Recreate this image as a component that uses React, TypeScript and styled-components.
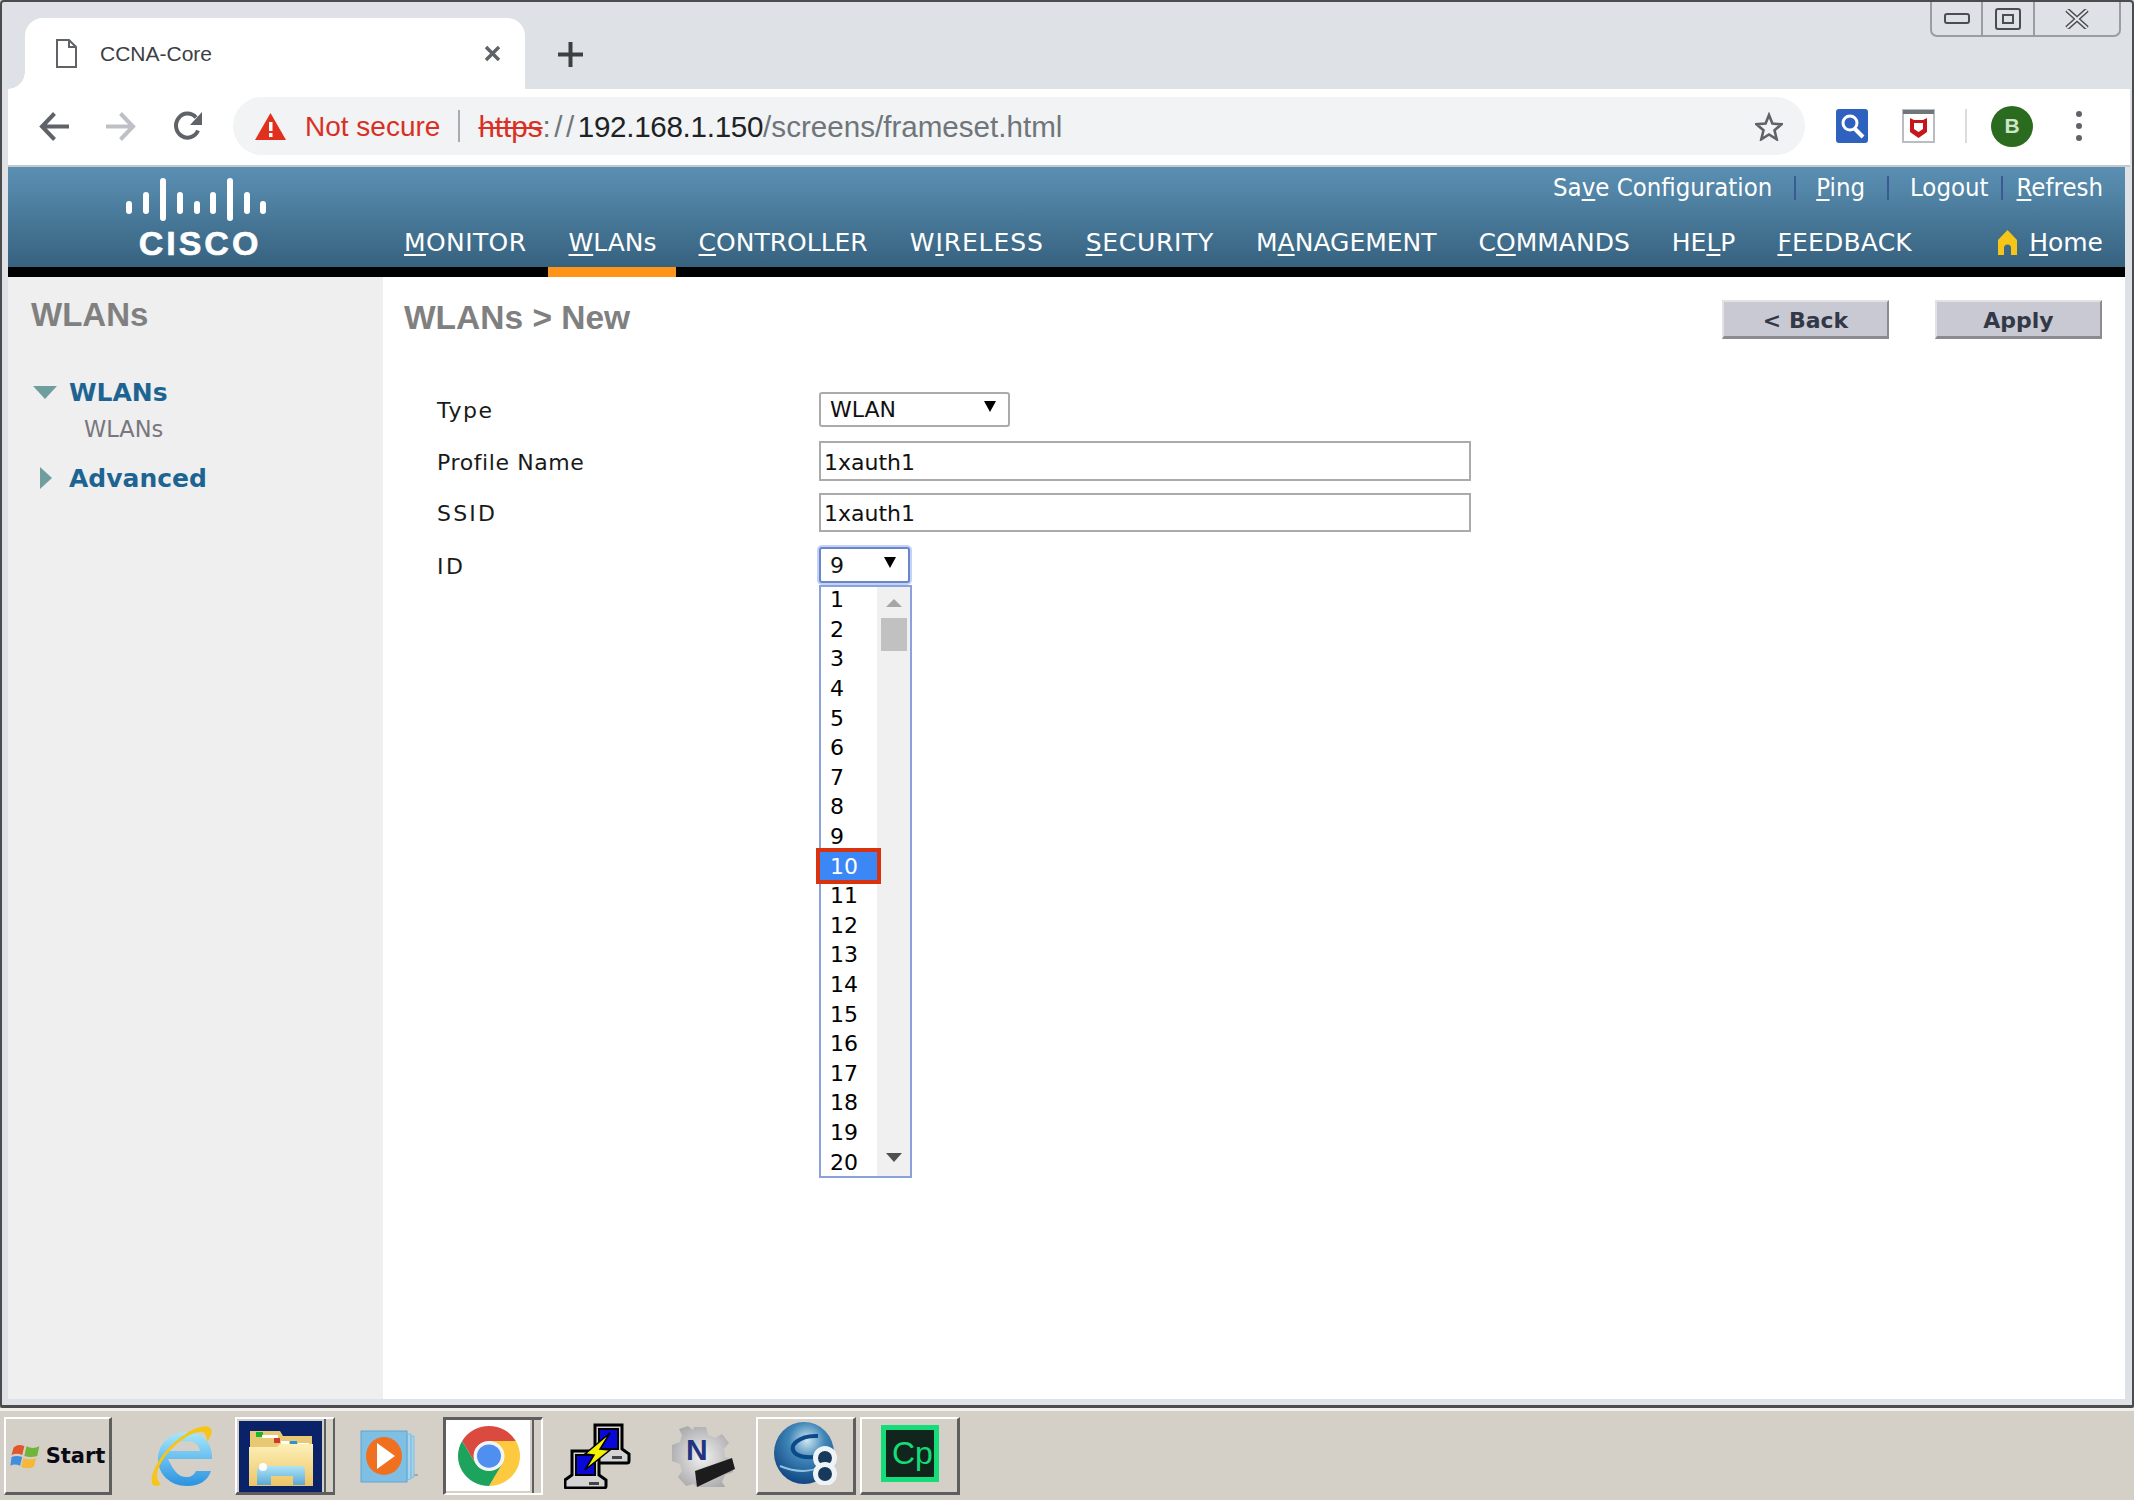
import styled, { createGlobalStyle } from 'styled-components';

const GlobalStyle = createGlobalStyle`
    html, body {
        margin: 0;
        padding: 0;
        background: #d4d0c8;
    }
    * {
        box-sizing: border-box;
    }
`;

const Page = styled.div`
    width: 2134px;
    height: 1500px;
    overflow: hidden;
    display: flex;
    flex-direction: column;
    background: #d4d0c8;
`;

const Window = styled.div`
    height: 1408px;
    display: flex;
    flex-direction: column;
    background: #dee1e6;
    border: 2px solid #4c4c4c;
    border-bottom-width: 3px;
    border-radius: 4px 4px 2px 2px;
`;

/* browser chrome */
const TabStrip = styled.div`
    height: 87px;
    display: flex;
    align-items: flex-start;
    padding: 0 11px 0 23px;
`;

const Tab = styled.div`
    position: relative;
    width: 500px;
    height: 71px;
    margin-top: 16px;
    padding: 0 24px 0 31px;
    display: flex;
    align-items: center;
    background: #fff;
    border-radius: 18px 18px 0 0;
    font: 21px "Liberation Sans", Arial, sans-serif;
    color: #3c4043;

    &::before {
        content: '';
        position: absolute;
        left: -17px;
        bottom: 0;
        width: 17px;
        height: 17px;
        background: radial-gradient(circle at 0 0, transparent 16.5px, #fff 17px);
    }
`;

const TabTitle = styled.span`
    margin-left: 23px;
    flex: 1;
`;

const NewTab = styled.div`
    margin: 40px 0 0 33px;
    display: flex;
`;

const WindowControls = styled.div`
    margin-left: auto;
    width: 191px;
    height: 35px;
    display: flex;
    border: 2px solid #9a9da3;
    border-top: 0;
    border-radius: 0 0 7px 7px;
`;

const ControlCell = styled.div<{ $w: number; $last?: boolean }>`
    width: ${({ $w }) => $w}px;
    display: flex;
    align-items: center;
    justify-content: center;
    border-right: ${({ $last }) => ($last ? '0' : '2px solid #9a9da3')};
`;

const Frame = styled.div`
    flex: 1;
    display: flex;
    flex-direction: column;
    padding: 0 7px 6px 6px;
    min-height: 0;
`;

const Toolbar = styled.div`
    height: 78px;
    margin-right: -5px;
    padding: 0 0 2px 12px;
    display: flex;
    align-items: center;
    background: #fff;
    border-bottom: 2px solid #c6c8cb;
`;

const ToolButton = styled.div`
    width: 67px;
    display: flex;
    justify-content: center;
`;

const Omnibox = styled.div`
    width: 1572px;
    height: 58px;
    margin-left: 12px;
    padding: 0 22px;
    display: flex;
    align-items: center;
    background: #f1f3f4;
    border-radius: 29px;
    font: 28px "Liberation Sans", Arial, sans-serif;
    white-space: nowrap;
`;

const NotSecure = styled.span`
    margin: 2px 0 0 19px;
    color: #d93025;
`;

const OmniDivider = styled.span`
    width: 2px;
    height: 32px;
    margin: 0 18px 0 18px;
    background: #a9abae;
`;

const Url = styled.span`
    margin-top: 2px;
    font-size: 29.6px;
`;

const Scheme = styled.span`
    color: #d93025;
    text-decoration: line-through;
`;

const UrlDim = styled.span<{ $spaced?: boolean }>`
    color: #70757a;
    letter-spacing: ${({ $spaced }) => ($spaced ? '3.5px' : '0')};
`;

const UrlHost = styled.span`
    color: #202124;
    letter-spacing: -0.3px;
`;

const Star = styled.div`
    margin-left: auto;
    display: flex;
`;

const Extensions = styled.div`
    margin-left: 31px;
    display: flex;
    align-items: center;
`;

const ExtSlot = styled.div<{ $ml?: number }>`
    margin-left: ${({ $ml }) => $ml ?? 0}px;
    display: flex;
`;

const ToolDivider = styled.span`
    width: 2px;
    height: 34px;
    margin: 0 24px 0 30px;
    background: #dadce0;
`;

const Avatar = styled.div`
    width: 42px;
    height: 41px;
    display: flex;
    align-items: center;
    justify-content: center;
    border-radius: 50%;
    background: #2b6b20;
    color: #cfe3c8;
    font: bold 21px "Liberation Sans", Arial, sans-serif;
`;

const MoreDots = styled.div`
    margin-left: 43px;
    display: flex;
    flex-direction: column;
    gap: 6px;

    span {
        width: 6px;
        height: 6px;
        border-radius: 50%;
        background: #5f6368;
    }
`;

/* controller page */
const Header = styled.div`
    height: 100px;
    display: flex;
    background: linear-gradient(#5b90b3, #36627f);
`;

const LogoBox = styled.div`
    width: 396px;
    padding: 11px 0 0 118px;
    display: flex;
    flex-direction: column;
    color: #fff;
`;

const CiscoWord = styled.div`
    width: 142px;
    margin: 6px 0 0 3px;
    text-align: center;
    font: bold 34px/30px "Liberation Sans", Arial, sans-serif;
    letter-spacing: 3px;
    -webkit-text-stroke: 0.6px #fff;
`;

const HeaderRight = styled.div`
    flex: 1;
    display: flex;
    flex-direction: column;
    padding-right: 22px;
    color: #fff;
`;

const TopLinks = styled.div`
    height: 37px;
    display: flex;
    justify-content: flex-end;
    align-items: flex-end;
    font: 25.5px/33px "DejaVu Sans Condensed", "DejaVu Sans", sans-serif;
    font-stretch: condensed;
`;

const LinkSep = styled.span<{ $l: number; $r: number }>`
    width: 2px;
    height: 24px;
    margin: 0 ${({ $r }) => $r}px 4px ${({ $l }) => $l}px;
    background: #3c5a92;
`;

const Key = styled.span`
    text-decoration: underline;
    text-decoration-thickness: 2px;
    text-underline-offset: 3px;
`;

const Nav = styled.nav`
    flex: 1;
    display: flex;
    align-items: center;
    gap: 42px;
    padding-top: 13px;
    font: 25px "DejaVu Sans", sans-serif;
    white-space: nowrap;
`;

const NavItem = styled.span<{ $spacing?: number }>`
    letter-spacing: ${({ $spacing }) => $spacing ?? 0}px;
`;

const HomeLink = styled.span`
    margin-left: auto;
    display: flex;
    align-items: center;
    gap: 11px;
`;

const BlackBar = styled.div`
    height: 10px;
    padding-left: 540px;
    background: #000;
`;

const ActiveMark = styled.div`
    width: 128px;
    height: 100%;
    background: #ff9419;
`;

const Main = styled.div`
    flex: 1;
    display: flex;
    min-height: 0;
    background: #fff;
`;

const Sidebar = styled.aside`
    width: 375px;
    padding: 18px 0 0 23px;
    background: #efefef;
`;

const SideHeading = styled.h2`
    margin: 0 0 37px;
    font: bold 33px/40px "Liberation Sans", Arial, sans-serif;
    color: #808080;
`;

const TreeRow = styled.div<{ $mt?: number }>`
    height: 40px;
    margin-top: ${({ $mt }) => $mt ?? 0}px;
    display: flex;
    align-items: center;
    font: bold 25px "DejaVu Sans", sans-serif;
    color: #1e6492;
`;

const Caret = styled.span`
    width: 38px;
    display: flex;
`;

const CaretDown = styled.span`
    margin-left: 2px;
    border-style: solid;
    border-width: 13px 12px 0;
    border-color: #6f9e9e transparent transparent;
`;

const CaretRight = styled.span`
    margin-left: 9px;
    border-style: solid;
    border-width: 11px 0 11px 12px;
    border-color: transparent transparent transparent #6f9e9e;
`;

const TreeChild = styled.div`
    margin-left: 53px;
    font: 22.5px/34px "DejaVu Sans", sans-serif;
    color: #77777e;
`;

const Content = styled.main`
    flex: 1;
    padding: 23px 23px 0 21px;
`;

const TitleRow = styled.div`
    height: 39px;
    display: flex;
    align-items: center;
`;

const PageTitle = styled.h1`
    margin: -4px auto 0 0;
    font: bold 33.5px "Liberation Sans", Arial, sans-serif;
    color: #808080;
`;

const ActionButton = styled.button<{ $ml?: number }>`
    width: 167px;
    height: 39px;
    margin-left: ${({ $ml }) => $ml ?? 0}px;
    padding: 2px 0 0;
    background: #c9c9d4;
    border: 2px solid;
    border-color: #e2e2e6 #8b8b90 #8b8b90 #e2e2e6;
    border-width: 2px 2px 3px 2px;
    font: bold 22px "DejaVu Sans", sans-serif;
    color: #333847;
`;

const Form = styled.div`
    margin: 53px 0 0 33px;
`;

const FormRow = styled.div<{ $h: number; $mb: number }>`
    height: ${({ $h }) => $h}px;
    margin-bottom: ${({ $mb }) => $mb}px;
    display: grid;
    grid-template-columns: 382px 1fr;
    align-items: center;
    font: 22px "DejaVu Sans", sans-serif;
    color: #1a1a1a;
`;

const FieldLabel = styled.label<{ $spacing: number }>`
    display: block;
    padding-top: 2px;
    letter-spacing: ${({ $spacing }) => $spacing}px;
`;

const TextField = styled.div`
    width: 652px;
    height: 100%;
    padding: 2px 0 0 3px;
    display: flex;
    align-items: center;
    background: #fff;
    border: 2px solid #ababab;
    color: #111;
`;

const SelectField = styled.div<{ $w: number; $focus?: boolean }>`
    position: relative;
    width: ${({ $w }) => $w}px;
    height: 100%;
    padding: 0 12px 0 9px;
    display: flex;
    align-items: center;
    justify-content: space-between;
    background: #fff;
    border: 2px solid ${({ $focus }) => ($focus ? '#6a85c8' : '#ababab')};
    border-radius: 3px;
    box-shadow: ${({ $focus }) => ($focus ? '0 0 0 2px #c3d2f6' : 'none')};
    color: #111;
`;

const SelectArrow = styled.span`
    margin-top: -6px;
    border-style: solid;
    border-width: 11px 6.5px 0;
    border-color: #000 transparent transparent;
`;

const ListBox = styled.div`
    position: absolute;
    top: 36px;
    left: -2px;
    width: 93px;
    height: 593px;
    display: flex;
    background: #fff;
    border: 2px solid #8ba1dc;
    font: 22px "DejaVu Sans", sans-serif;
    color: #000;
`;

const ListItems = styled.div`
    width: 56px;
    margin-top: -2px;
`;

const ListItem = styled.div<{ $active?: boolean }>`
    position: relative;
    height: ${({ $active }) => ($active ? 36 : 29.6)}px;
    margin: ${({ $active }) => ($active ? '-3.2px -4px -3.2px -5px' : '0')};
    padding-left: ${({ $active }) => ($active ? 10 : 9)}px;
    display: flex;
    align-items: center;
    background: ${({ $active }) => ($active ? '#3b87f5' : 'transparent')};
    border: ${({ $active }) => ($active ? '4px solid #d9320e' : '0')};
    color: ${({ $active }) => ($active ? '#fff' : '#000')};
`;

const ScrollBar = styled.div`
    flex: 1;
    padding: 12px 3px 14px 4px;
    display: flex;
    flex-direction: column;
    align-items: center;
    background: #f0f0f0;
`;

const ScrollUp = styled.span`
    border-style: solid;
    border-width: 0 8px 8px;
    border-color: transparent transparent #a6a6a6;
`;

const ScrollThumb = styled.span`
    width: 100%;
    height: 33px;
    margin-top: 11px;
    background: #c1c1c1;
`;

const ScrollDown = styled.span`
    margin-top: auto;
    border-style: solid;
    border-width: 9px 8px 0;
    border-color: #505050 transparent transparent;
`;

/* windows taskbar */
const Taskbar = styled.div`
    flex: 1;
    padding: 6px 0 5px 4px;
    display: flex;
    align-items: stretch;
    background: #d4d0c8;
    border-top: 3px solid #f1f0ec;
`;

const RaisedButton = styled.div<{ $w: number; $ml?: number; $pb?: number }>`
    width: ${({ $w }) => $w}px;
    margin-left: ${({ $ml }) => $ml ?? 0}px;
    padding-bottom: ${({ $pb }) => $pb ?? 0}px;
    display: flex;
    align-items: center;
    justify-content: center;
    border: 2px solid;
    border-color: #fff #5e5e5e #5e5e5e #fff;
    border-width: 2px 3px 3px 2px;
`;

const StartLabel = styled.span`
    margin-left: 3px;
    font: bold 21px "DejaVu Sans", sans-serif;
    color: #0a0a14;
`;

const IconSlot = styled.div<{ $w: number; $pl?: number }>`
    width: ${({ $w }) => $w}px;
    padding-left: ${({ $pl }) => $pl ?? 0}px;
    display: flex;
    align-items: center;
    justify-content: center;
`;

const ExplorerButton = styled.div`
    width: 100px;
    display: flex;
    border: 2px solid;
    border-color: #fff #5e5e5e #5e5e5e #fff;
    border-width: 2px 2px 3px 2px;
`;

const ExplorerFace = styled.div`
    flex: 1;
    margin: 2px 0 0 2px;
    display: flex;
    align-items: center;
    justify-content: center;
    background: #0a2368;
`;

const ButtonSliver = styled.div`
    width: 9px;
    margin-left: 2px;
    background: #d4d0c8;
    border-left: 2px solid #5e5e5e;
`;

const ChromeButton = styled.div`
    width: 100px;
    display: flex;
    border: 2px solid;
    border-color: #5e5e5e #fff #fff #5e5e5e;
    border-width: 3px 2px 2px 3px;
`;

const ChromeFace = styled.div`
    flex: 1;
    padding-left: 2px;
    display: flex;
    align-items: center;
    justify-content: center;
    background: #fff;
    border-bottom: 2px solid #d4d0c8;
`;

const FileIcon = () => (
    <svg width="21" height="29" viewBox="0 0 21 29">
        <path d="M1 1h12l7 7v20H1z M13 1v7h7" fill="#fff" stroke="#5f6368" strokeWidth="2" />
    </svg>
);

const CloseIcon = () => (
    <svg width="17" height="17" viewBox="0 0 17 17">
        <path d="M2 2l13 13M15 2L2 15" stroke="#5f6368" strokeWidth="3.4" />
    </svg>
);

const PlusIcon = () => (
    <svg width="25" height="25" viewBox="0 0 25 25">
        <path d="M12.5 0v25M0 12.5h25" stroke="#3c4043" strokeWidth="4" />
    </svg>
);

const ArrowIcon = ({ color, flip }: { color: string; flip?: boolean }) => (
    <svg width="30" height="29" viewBox="0 0 30 29" style={flip ? { transform: 'scaleX(-1)' } : undefined}>
        <path d="M30 14.5H5M15.5 1.5L3 14.5l12.5 13" fill="none" stroke={color} strokeWidth="4" />
    </svg>
);

const ReloadIcon = () => (
    <svg width="30" height="30" viewBox="0 0 30 30">
        <path d="M25 19.5A11.5 12 0 1 1 23 6.500" fill="none" stroke="#5f6368" strokeWidth="4" />
        <path d="M29 1v13H17z" fill="#5f6368" />
    </svg>
);

const WarningIcon = () => (
    <svg width="31" height="27" viewBox="0 0 31 27">
        <path d="M15.500 0L31 27H0z" fill="#e0301e" />
        <path d="M14 9h3.500v9H14zM14 20h3.500v4H14z" fill="#fff" />
    </svg>
);

const StarIcon = () => (
    <svg width="28" height="29" viewBox="0 0 28 29">
        <path
            d="M14 3l3.400 8.600 9.100.7-7 6 2.200 9L14 22.500 6.300 27.300l2.200-9-7-6 9.100-.7z"
            fill="none"
            stroke="#5f6368"
            strokeWidth="2.600"
        />
    </svg>
);

const SearchExtIcon = () => (
    <svg width="32" height="34" viewBox="0 0 32 34">
        <rect width="32" height="34" rx="3" fill="#2f62bf" />
        <circle cx="14" cy="14" r="7" fill="#2f62bf" stroke="#fff" strokeWidth="3" />
        <path d="M19 20l8 8" stroke="#fff" strokeWidth="4" />
    </svg>
);

const ShieldExtIcon = () => (
    <svg width="33" height="34" viewBox="0 0 33 34">
        <rect x="1" y="1" width="31" height="32" fill="#fff" stroke="#b9bcc0" strokeWidth="2" />
        <rect x="1" y="1" width="31" height="4" fill="#70757a" />
        <path d="M8 9l4 2h9l4-2v14l-8.500 6L8 23z" fill="#c5161d" />
        <path d="M12 14h9v6l-4.500 3-4.500-3z" fill="#fff" />
    </svg>
);

const CiscoBars = () => (
    <svg width="142" height="44" viewBox="0 0 142 44">
        {[
            [0, 23, 13],
            [17, 14, 22],
            [34, 0, 43],
            [51, 14, 22],
            [68, 23, 13],
            [84, 14, 22],
            [101, 0, 43],
            [118, 14, 22],
            [134, 23, 13],
        ].map(([x, y, h]) => (
            <rect key={x} x={x} y={y} width="6" height={h} rx="3" fill="#fff" />
        ))}
    </svg>
);

const HomeIcon = () => (
    <svg width="21" height="25" viewBox="0 0 21 25">
        <path d="M10.500 0L20 10v15h-6v-7a3.500 3.500 0 0 0-7 0v7H1V10z" fill="#f5c518" />
    </svg>
);

const WinMin = () => (
    <svg width="26" height="11" viewBox="0 0 26 11">
        <rect x="1" y="1" width="24" height="9" rx="2" fill="none" stroke="#4a4d52" strokeWidth="2" />
    </svg>
);

const WinMax = () => (
    <svg width="26" height="22" viewBox="0 0 26 22">
        <rect x="1" y="1" width="24" height="20" rx="2" fill="none" stroke="#4a4d52" strokeWidth="2" />
        <rect x="8" y="7" width="10" height="8" fill="none" stroke="#4a4d52" strokeWidth="2" />
    </svg>
);

const WinClose = () => (
    <svg width="24" height="20" viewBox="0 0 24 20">
        <path d="M2 1l20 18M22 1L2 19" stroke="#4a4d52" strokeWidth="5" />
        <path d="M2 1l20 18M22 1L2 19" stroke="#e6e8ec" strokeWidth="2" />
    </svg>
);

const WinFlag = () => (
    <svg width="33" height="30" viewBox="0 0 30 28">
        <path d="M3 6q5-4 10-1l-2 8q-5-2-10 0z" fill="#e2562a" />
        <path d="M15 5q6 3 12 0l-2 9q-6 2-12 0z" fill="#6fb53a" />
        <path d="M1 15q5-2 10 0l-2 8q-5-2-9 0z" fill="#3f8fdc" />
        <path d="M12 16q6 2 12 0l-2 8q-6 3-12 0z" fill="#f4b93a" />
    </svg>
);

const IeIcon = () => (
    <svg width="64" height="63" viewBox="0 0 64 63">
        <defs>
            <linearGradient id="ie-blue" x1="0" y1="0" x2="0" y2="1">
                <stop offset="0" stopColor="#a6e8fc" />
                <stop offset="1" stopColor="#2a92e0" />
            </linearGradient>
        </defs>
        <path
            d="M18 34h44c1-16-10-27-25-27C20 7 8 19 8 34s12 27 29 27c13 0 21-6 24-15H46c-2 4-5 6-9 6-9 0-13-6-19-18zM20 26c1-7 8-10 17-10 8 0 12 4 13 10z"
            fill="url(#ie-blue)"
            fillRule="evenodd"
        />
        <path
            d="M3 60C-3 52 12 24 34 10 44 3 58-2 61 4c2 3-1 9-4 13 0-5-1-10-6-10C34 7 8 34 7 50c0 4 1 7 4 9-3 2-6 3-8 1z"
            fill="#f5c518"
        />
    </svg>
);

const ExplorerIcon = () => (
    <svg width="66" height="60" viewBox="0 0 66 60">
        <defs>
            <linearGradient id="folder-body" x1="0" y1="0" x2="0" y2="1">
                <stop offset="0" stopColor="#fdf0b8" />
                <stop offset="1" stopColor="#ecc566" />
            </linearGradient>
            <linearGradient id="folder-stand" x1="0" y1="0" x2="0" y2="1">
                <stop offset="0" stopColor="#aee4f5" />
                <stop offset="1" stopColor="#5aa9d6" />
            </linearGradient>
        </defs>
        <path d="M2 4h30l3 5h29v50H2z" fill="#e9c873" />
        <rect x="8" y="5" width="7" height="5" fill="#1cb52e" />
        <rect x="26" y="11" width="6" height="5" fill="#d23a28" />
        <rect x="42" y="14" width="7" height="5" fill="#2a90e0" />
        <path d="M14 8h16v3H14zM33 14h8v3h-8zM50 16h11v3H50z" fill="#fff" />
        <path d="M1 20h28l3-3h33v42H1z" fill="url(#folder-body)" />
        <path d="M9 58V44q0-5 5-5h38q5 0 5 5v14H45V49H23v9z" fill="url(#folder-stand)" />
        <circle cx="15" cy="40" r="4" fill="#fff" />
    </svg>
);

const PlayerIcon = () => (
    <svg width="58" height="53" viewBox="0 0 58 53">
        <path d="M47 4h4v45l-4 1zM51 6h3v41l-3 1z" fill="#a9d3ea" stroke="#7fbfe3" />
        <rect x="1" y="1" width="46" height="51" fill="#7fbfe3" stroke="#5fa6d0" />
        <ellipse cx="24" cy="26" rx="18" ry="19" fill="#f0701f" />
        <path d="M17 13l18 13-18 13z" fill="#fff" />
        <rect x="54" y="44" width="4" height="2" fill="#aaa79f" />
    </svg>
);

const ChromeIcon = () => {
    const sector = 'M5.150 16.500A31 31 0 0 1 58.850 16.500H32A15.500 15.500 0 0 0 18.580 39.750Z';

    return (
        <svg width="64" height="62" viewBox="0 0 64 64" preserveAspectRatio="none">
            <circle cx="32" cy="32" r="31" fill="#fff" />
            <path d={sector} fill="#db4a3f" />
            <path d={sector} fill="#fdc93f" transform="rotate(120 32 32)" />
            <path d={sector} fill="#1da35b" transform="rotate(240 32 32)" />
            <circle cx="32" cy="32" r="15" fill="#f1f3f4" />
            <circle cx="32" cy="32" r="12" fill="#4f8ff0" />
        </svg>
    );
};

const PuttyIcon = () => (
    <svg width="67" height="66" viewBox="0 0 67 66">
        <path d="M31 2h27v24l7 5v7a2 2 0 0 1-2 2H34V26h-3z" fill="#d4d4d4" stroke="#000" strokeWidth="3" />
        <rect x="35" y="6" width="19" height="20" fill="#0808d8" stroke="#000" strokeWidth="2" />
        <rect x="48" y="33" width="10" height="3" fill="#444" />
        <path d="M8 28h27v24l7 5v6a2 2 0 0 1-2 2H3a2 2 0 0 1-2-2v-6l7-5z" fill="#d4d4d4" stroke="#000" strokeWidth="3" />
        <rect x="12" y="32" width="19" height="20" fill="#0808d8" stroke="#000" strokeWidth="2" />
        <rect x="25" y="59" width="10" height="3" fill="#444" />
        <path d="M46 10L36 26l10 1-25 20 9-15-9-1z" fill="#f4f000" stroke="#000" strokeWidth="1.500" />
    </svg>
);

const NetworkIcon = () => (
    <svg width="63" height="62" viewBox="0 0 63 62">
        <defs>
            <radialGradient id="gear-fill" cx="0.5" cy="0.5" r="0.6">
                <stop offset="0" stopColor="#f2f2f2" />
                <stop offset="1" stopColor="#a5a5a8" />
            </radialGradient>
        </defs>
        <path
            d="M22 2h12l2 8 7 3 7-4 7 9-5 6 1 8 8 3v12l-8 3-3 7 4 6H26l-4-4-8 2-8-9 4-6-2-7-8-3V20l8-3 2-7-3-6 9-3 5 4z"
            fill="url(#gear-fill)"
        />
        <text x="14" y="35" fontFamily="'Liberation Sans', Arial, sans-serif" fontWeight="bold" fontSize="30" fill="#24337f">
            N
        </text>
        <path d="M23 46l37-13 3 11-38 18z" fill="#1c1c1c" />
    </svg>
);

const GlobeIcon = () => (
    <svg width="64" height="63" viewBox="0 0 64 63">
        <defs>
            <radialGradient id="globe-fill" cx="0.55" cy="0.3" r="0.75">
                <stop offset="0" stopColor="#cfe6f2" />
                <stop offset="0.4" stopColor="#3f86b8" />
                <stop offset="1" stopColor="#0c3f7c" />
            </radialGradient>
        </defs>
        <ellipse cx="30" cy="31" rx="30" ry="31" fill="url(#globe-fill)" />
        <path d="M44 14C26 13 12 24 22 32c8 5 24 3 36 0" fill="none" stroke="#0b4a86" strokeWidth="4" />
        <path d="M6 44q24 10 42 0" fill="none" stroke="#8fc4e0" strokeWidth="2" />
        <circle cx="51" cy="36" r="9.500" fill="#173a5c" stroke="#eef3f6" strokeWidth="5" />
        <circle cx="51" cy="52" r="9.500" fill="#173a5c" stroke="#eef3f6" strokeWidth="5" />
    </svg>
);

const CaptivateIcon = () => (
    <svg width="58" height="57" viewBox="0 0 58 57">
        <rect x="2.500" y="2.500" width="53" height="52" fill="#12251c" stroke="#14dc78" strokeWidth="5" />
        <text x="11" y="39" fontFamily="'Liberation Sans', Arial, sans-serif" fontSize="32" fill="#14dc78">
            Cp
        </text>
    </svg>
);

const listValues = Array.from({ length: 20 }, (_, i) => i + 1);

const App = () => (
    <Page>
        <GlobalStyle />
        <Window>
            <TabStrip>
                <Tab>
                    <FileIcon />
                    <TabTitle>CCNA-Core</TabTitle>
                    <CloseIcon />
                </Tab>
                <NewTab>
                    <PlusIcon />
                </NewTab>
                <WindowControls>
                    <ControlCell $w={52}>
                        <WinMin />
                    </ControlCell>
                    <ControlCell $w={52}>
                        <WinMax />
                    </ControlCell>
                    <ControlCell $w={85} $last>
                        <WinClose />
                    </ControlCell>
                </WindowControls>
            </TabStrip>
            <Frame>
                <Toolbar>
                    <ToolButton>
                        <ArrowIcon color="#5f6368" />
                    </ToolButton>
                    <ToolButton>
                        <ArrowIcon color="#bdc1c6" flip />
                    </ToolButton>
                    <ToolButton>
                        <ReloadIcon />
                    </ToolButton>
                    <Omnibox>
                        <WarningIcon />
                        <NotSecure>Not secure</NotSecure>
                        <OmniDivider />
                        <Url>
                            <Scheme>https</Scheme>
                            <UrlDim $spaced>://</UrlDim>
                            <UrlHost>192.168.1.150</UrlHost>
                            <UrlDim>/screens/frameset.html</UrlDim>
                        </Url>
                        <Star>
                            <StarIcon />
                        </Star>
                    </Omnibox>
                    <Extensions>
                        <ExtSlot>
                            <SearchExtIcon />
                        </ExtSlot>
                        <ExtSlot $ml={34}>
                            <ShieldExtIcon />
                        </ExtSlot>
                        <ToolDivider />
                        <Avatar>B</Avatar>
                        <MoreDots>
                            <span />
                            <span />
                            <span />
                        </MoreDots>
                    </Extensions>
                </Toolbar>
                <Header>
                    <LogoBox>
                        <CiscoBars />
                        <CiscoWord>CISCO</CiscoWord>
                    </LogoBox>
                    <HeaderRight>
                        <TopLinks>
                            <span>
                                Sa<Key>v</Key>e Configuration
                            </span>
                            <LinkSep $l={22} $r={20} />
                            <span>
                                <Key>P</Key>ing
                            </span>
                            <LinkSep $l={22} $r={21} />
                            <span>Logout</span>
                            <LinkSep $l={12} $r={14} />
                            <span>
                                <Key>R</Key>efresh
                            </span>
                        </TopLinks>
                        <Nav>
                            <NavItem $spacing={0.4}>
                                <Key>M</Key>ONITOR
                            </NavItem>
                            <NavItem>
                                <Key>W</Key>LANs
                            </NavItem>
                            <NavItem>
                                <Key>C</Key>ONTROLLER
                            </NavItem>
                            <NavItem $spacing={0.9}>
                                W<Key>I</Key>RELESS
                            </NavItem>
                            <NavItem $spacing={0.7}>
                                <Key>S</Key>ECURITY
                            </NavItem>
                            <NavItem>
                                M<Key>A</Key>NAGEMENT
                            </NavItem>
                            <NavItem>
                                C<Key>O</Key>MMANDS
                            </NavItem>
                            <NavItem>
                                HE<Key>L</Key>P
                            </NavItem>
                            <NavItem $spacing={0.2}>
                                <Key>F</Key>EEDBACK
                            </NavItem>
                            <HomeLink>
                                <HomeIcon />
                                <span>
                                    <Key>H</Key>ome
                                </span>
                            </HomeLink>
                        </Nav>
                    </HeaderRight>
                </Header>
                <BlackBar>
                    <ActiveMark />
                </BlackBar>
                <Main>
                    <Sidebar>
                        <SideHeading>WLANs</SideHeading>
                        <TreeRow>
                            <Caret>
                                <CaretDown />
                            </Caret>
                            WLANs
                        </TreeRow>
                        <TreeChild>WLANs</TreeChild>
                        <TreeRow $mt={12}>
                            <Caret>
                                <CaretRight />
                            </Caret>
                            Advanced
                        </TreeRow>
                    </Sidebar>
                    <Content>
                        <TitleRow>
                            <PageTitle>WLANs &gt; New</PageTitle>
                            <ActionButton>&lt; Back</ActionButton>
                            <ActionButton $ml={46}>Apply</ActionButton>
                        </TitleRow>
                        <Form>
                            <FormRow $h={35} $mb={14}>
                                <FieldLabel $spacing={1.5}>Type</FieldLabel>
                                <SelectField $w={191}>
                                    WLAN
                                    <SelectArrow />
                                </SelectField>
                            </FormRow>
                            <FormRow $h={40} $mb={12}>
                                <FieldLabel $spacing={0.6}>Profile Name</FieldLabel>
                                <TextField>1xauth1</TextField>
                            </FormRow>
                            <FormRow $h={39} $mb={15}>
                                <FieldLabel $spacing={2.2}>SSID</FieldLabel>
                                <TextField>1xauth1</TextField>
                            </FormRow>
                            <FormRow $h={36} $mb={0}>
                                <FieldLabel $spacing={2.5}>ID</FieldLabel>
                                <SelectField $w={91} $focus>
                                    9
                                    <SelectArrow />
                                    <ListBox>
                                        <ListItems>
                                            {listValues.map((value) => (
                                                <ListItem key={value} $active={value === 10}>
                                                    {value}
                                                </ListItem>
                                            ))}
                                        </ListItems>
                                        <ScrollBar>
                                            <ScrollUp />
                                            <ScrollThumb />
                                            <ScrollDown />
                                        </ScrollBar>
                                    </ListBox>
                                </SelectField>
                            </FormRow>
                        </Form>
                    </Content>
                </Main>
            </Frame>
        </Window>
        <Taskbar>
            <RaisedButton $w={108}>
                <WinFlag />
                <StartLabel>Start</StartLabel>
            </RaisedButton>
            <IconSlot $w={123} $pl={17}>
                <IeIcon />
            </IconSlot>
            <ExplorerButton>
                <ExplorerFace>
                    <ExplorerIcon />
                </ExplorerFace>
                <ButtonSliver />
            </ExplorerButton>
            <IconSlot $w={108}>
                <PlayerIcon />
            </IconSlot>
            <ChromeButton>
                <ChromeFace>
                    <ChromeIcon />
                </ChromeFace>
                <ButtonSliver />
            </ChromeButton>
            <IconSlot $w={108}>
                <PuttyIcon />
            </IconSlot>
            <IconSlot $w={105}>
                <NetworkIcon />
            </IconSlot>
            <RaisedButton $w={100} $pb={4}>
                <GlobeIcon />
            </RaisedButton>
            <RaisedButton $w={100} $ml={4} $pb={4}>
                <CaptivateIcon />
            </RaisedButton>
        </Taskbar>
    </Page>
);

export default App;
